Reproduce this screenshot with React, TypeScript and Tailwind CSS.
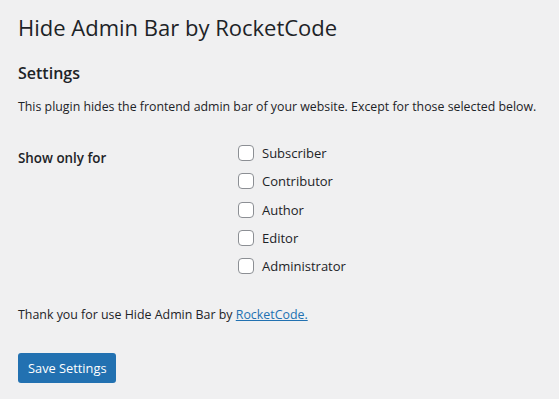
const roles = ["Subscriber", "Contributor", "Author", "Editor", "Administrator"];

const font = "font-['Segoe_UI','Open_Sans','Noto_Sans',sans-serif]";

export default function App() {
  return (
    <div className={`min-h-[399px] w-[559px] bg-[#f0f0f1] text-[#1d2327] ${font} px-[18px] pt-[10px]`}>
      <h1 className="text-[22px] leading-[34px] font-normal">Hide Admin Bar by RocketCode</h1>

      <h2 className="mt-[17px] text-[16px] leading-[24px] font-semibold">Settings</h2>

      <p className="mt-[10px] text-[12.35px] leading-[24px] whitespace-nowrap">
        This plugin hides the frontend admin bar of your website. Except for those selected below.
      </p>

      <div className="mt-[20px] flex">
        <div className="w-[220px] pt-[9px] text-[13.4px] leading-[20px] font-semibold">Show only for</div>
        <div className="flex flex-col gap-[12.25px] pt-[6px]">
          {roles.map((r) => (
            <label key={r} className="flex items-center gap-[8px] text-[13px] leading-[16px]">
              <span className="w-4 h-4 rounded-[4px] border border-[#8c8f94] bg-white shrink-0" />
              {r}
            </label>
          ))}
        </div>
      </div>

      <p className="mt-[29px] text-[12.4px] leading-[24px]">
        Thank you for use Hide Admin Bar by{" "}
        <a className="text-[#2271b1] underline">RocketCode.</a>
      </p>

      <button className="mt-[26px] h-[30px] px-[10px] rounded-[3px] bg-[#2271b1] text-white text-[12.8px] leading-[28px]">
        Save Settings
      </button>
    </div>
  );
}
